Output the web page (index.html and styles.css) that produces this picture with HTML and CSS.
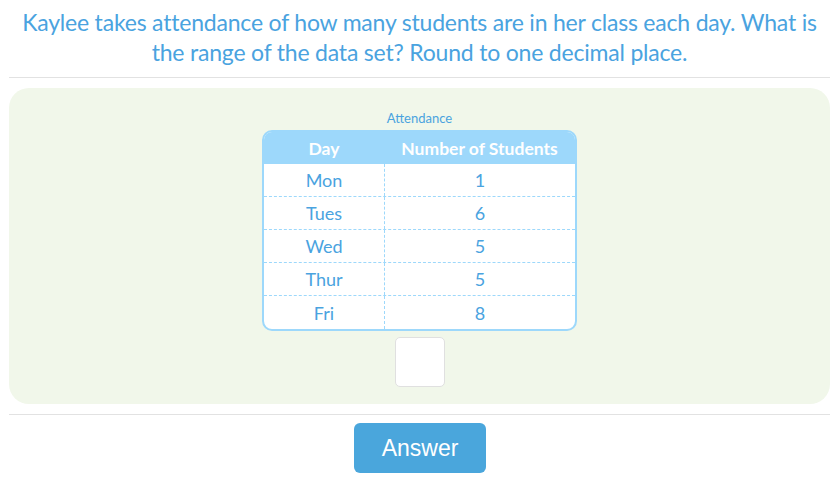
FILE: index.html
```html
<!DOCTYPE html>
<html>
<head>
<meta charset="utf-8">
<link rel="stylesheet" href="styles.css">
</head>
<body>
<div class="page">
  <h1 class="question">Kaylee takes attendance of how many students are in her class each day. What is the range of the data set? Round to one decimal place.</h1>
  <hr class="rule">
  <div class="panel">
    <div class="caption">Attendance</div>
    <div class="table">
      <div class="row head"><div class="c1">Day</div><div class="c2">Number of Students</div></div>
      <div class="row"><div class="c1">Mon</div><div class="c2">1</div></div>
      <div class="row"><div class="c1">Tues</div><div class="c2">6</div></div>
      <div class="row"><div class="c1">Wed</div><div class="c2">5</div></div>
      <div class="row"><div class="c1">Thur</div><div class="c2">5</div></div>
      <div class="row last"><div class="c1">Fri</div><div class="c2">8</div></div>
    </div>
    <div class="input"></div>
  </div>
  <hr class="rule rule2">
  <div class="actions"><button class="answer">Answer</button></div>
</div>
</body>
</html>
```
FILE: styles.css
```css
html, body { margin: 0; padding: 0; background: #fff; }
body { font-family: Lato, "Open Sans", sans-serif; color: #4aa3df; }
.page { padding: 0 10px 0 9px; }
.question {
  margin: 0;
  padding: 7px 12px 0;
  font-size: 23px;
  line-height: 30px;
  font-weight: 400;
  letter-spacing: -0.2px;
  text-align: center;
  color: #4aa3df;
}
.rule { border: 0; border-top: 1px solid #e2e2e2; margin: 10px 0 10px; }
.panel {
  background: #f1f7ea;
  border-radius: 20px;
  height: 316px;
  display: flex;
  flex-direction: column;
  align-items: center;
  padding-top: 21px;
  box-sizing: border-box;
}
.caption { font-size: 13px; line-height: 18px; margin-bottom: 3px; }
.table {
  width: 315px;
  border: 2px solid #9dd8fb;
  border-radius: 10px;
  overflow: hidden;
  background: #fff;
  box-sizing: border-box;
}
.row { display: flex; height: 33px; border-bottom: 1px dashed #9dd8fb; box-sizing: border-box; }
.row.last { border-bottom: 0; }
.row div { display: flex; align-items: center; justify-content: center; font-size: 18px; }
.c1 { width: 120px; border-right: 1px dashed #9dd8fb; }
.c2 { flex: 1; }
.row.head { background: #9dd8fb; height: 32px; border-bottom: 0; }
.row.head div { color: #fff; font-weight: 700; border-right: 0; font-size: 17.5px; }
.input {
  width: 50px; height: 50px;
  margin-top: 6px;
  background: #fff;
  border: 1px solid #e0e0e0;
  border-radius: 5px;
  box-sizing: border-box;
}
.rule2 { margin: 10px 0 8px; }
.actions { display: flex; justify-content: center; }
.answer {
  width: 132px; height: 50px;
  background: #4aa6dc;
  border: 0;
  border-radius: 6px;
  color: #fff;
  font-family: "Liberation Sans", Arial, sans-serif;
  font-size: 23px;
  margin-left: 1px;
}
```
